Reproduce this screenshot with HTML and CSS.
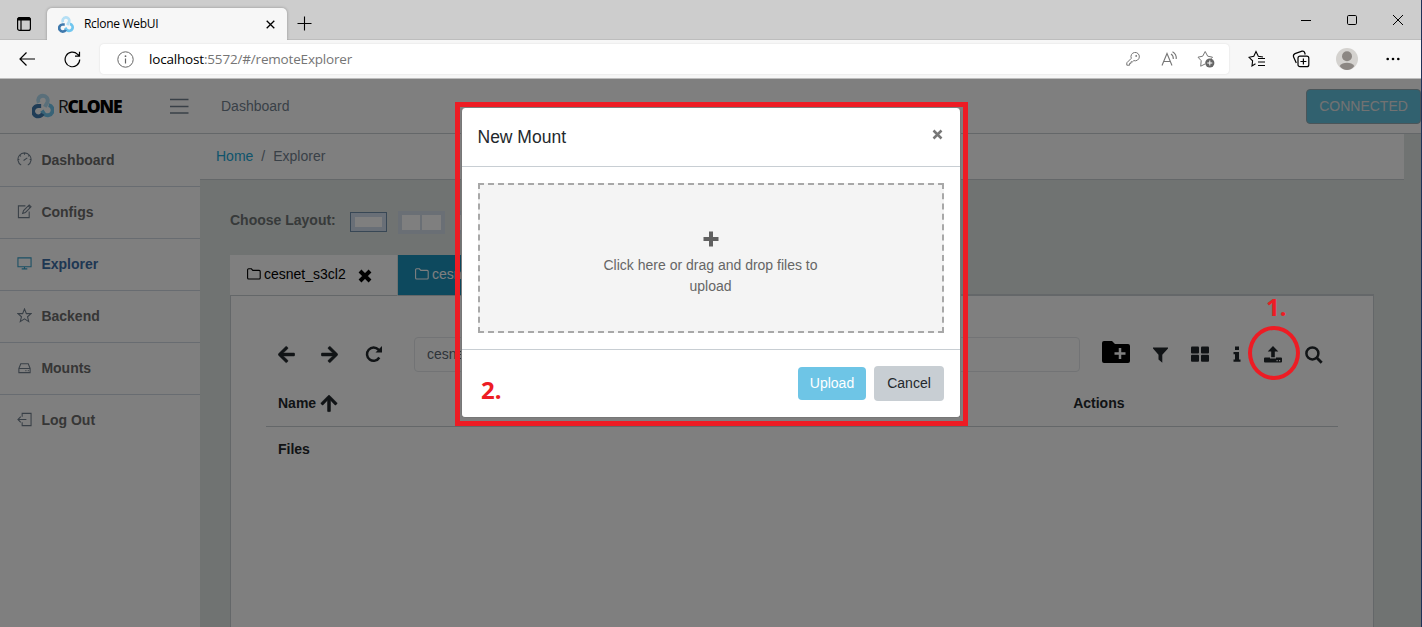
FILE: index.html
```html
<!DOCTYPE html>
<html lang="en">
<head>
<meta charset="utf-8">
<title>Rclone WebUI</title>
<link rel="stylesheet" href="styles.css">
</head>
<body>
<svg width="0" height="0" class="defs">
  <symbol id="rclone" viewBox="0 0 48 54">
    <g fill="none" stroke-width="8.500">
      <path class="c-light" d="M14.500 20A10.500 10.500 0 1 1 33.500 19L28 29"/>
      <path class="c-sky" d="M36.500 25A11.300 11.300 0 1 1 27 45L21.500 37"/>
      <path class="c-navy" d="M23.500 44A11.300 11.300 0 1 1 13 27H20"/>
    </g>
  </symbol>
  <symbol id="folder" viewBox="0 0 14 12">
    <path d="M.6 10V1.8Q.6.8 1.6.8H4.4L5.8 2.4H12.2Q13.2 2.4 13.2 3.4V10Q13.2 11 12.2 11H1.6Q.6 11 .6 10Z" fill="none" stroke="currentColor" stroke-width="1.1"/>
  </symbol>
  <symbol id="arrow" viewBox="0 0 448 512">
    <path fill="currentColor" stroke="currentColor" stroke-width="14" d="M257.5 445.1l-22.2 22.2c-9.4 9.4-24.6 9.4-33.9 0L7 273c-9.4-9.4-9.4-24.6 0-33.9L201.4 44.7c9.4-9.4 24.6-9.4 33.9 0l22.2 22.2c9.5 9.5 9.3 25-.4 34.3L136.6 216H424c13.3 0 24 10.7 24 24v32c0 13.3-10.7 24-24 24H136.6l120.5 114.8c9.8 9.3 10 24.8.4 34.3z"/>
  </symbol>
</svg>

<div class="window">
  <div class="titlebar">
    <svg class="tab-menu" width="16" height="16" viewBox="0 0 16 16"><rect x="1.6" y="1.6" width="12.8" height="12.8" rx="2" fill="none" stroke="#000" stroke-width="1.2"/><path d="M1.5 2.5Q2 1 3.500 1H12.500Q14 1 14.500 2.500V4.600H1.500Z"/><path d="M5 4V14.500" stroke="#000" stroke-width="1.200"/></svg>
    <div class="browser-tab">
      <svg class="favicon" width="16" height="17"><use href="#rclone"/></svg>
      <span>Rclone WebUI</span>
      <svg class="tab-close" width="9" height="9" viewBox="0 0 9 9"><path d="M.7.7L8.300 8.300M8.300.7L.7 8.300" stroke="#000" stroke-width="1.300"/></svg>
    </div>
    <svg class="new-tab" width="15" height="15" viewBox="0 0 15 15"><path d="M7.500.5V14.500M.5 7.500H14.500" stroke="#000" stroke-width="1.100"/></svg>
    <div class="win-buttons">
      <svg width="10" height="10" viewBox="0 0 10 10"><path d="M0 5.500H10" stroke="#000"/></svg>
      <svg width="10" height="10" viewBox="0 0 10 10"><rect x=".5" y=".5" width="9" height="9" rx="1.200" fill="none" stroke="#000"/></svg>
      <svg width="10" height="10" viewBox="0 0 10 10"><path d="M0 0L10 10M10 0L0 10" stroke="#000"/></svg>
    </div>
  </div>

  <div class="addressbar">
    <svg class="nav-back" width="17" height="14" viewBox="0 0 17 14"><path d="M7.500.5L1 7L7.500 13.500M1 7H16" fill="none" stroke="#000" stroke-width="1.200"/></svg>
    <svg class="nav-reload" width="17" height="17" viewBox="0 0 17 17"><path d="M15.700 8.500A7.300 7.300 0 1 1 13.600 3.300L15.500 5M15.500.8V5.200H11" fill="none" stroke="#000" stroke-width="1.200"/></svg>
    <div class="url-box">
      <svg width="17" height="17" viewBox="0 0 17 17"><circle cx="8.500" cy="8.500" r="7.700" fill="none" stroke="#666"/><path d="M8.500 7.500V12.500" stroke="#666" stroke-width="1.200"/><circle cx="8.500" cy="5.200" r=".9" fill="#666"/></svg>
      <span class="url"><b>localhost</b>:5572/#/remoteExplorer</span>
      <svg class="i-key" width="14" height="14" viewBox="0 0 14 14"><path d="M5.300 6.300A4.200 4.200 0 1 1 7.800 8.600L6.500 9.800H5V11.300H3.600V13.200H.8V10.800Z" fill="none" stroke="#767676"/><circle cx="10.200" cy="3.900" r=".9" fill="#767676"/></svg>
      <svg class="i-read" width="17" height="16" viewBox="0 0 17 16"><path d="M1 14.500L6 2.500L11 14.500M2.800 10.500H9.200M10 3Q12.500 4.500 12.300 8M11.500.7Q15.700 3 15.200 8" fill="none" stroke="#767676" stroke-width="1.100"/></svg>
      <svg class="i-fav" width="18" height="18" viewBox="0 0 18 18"><path d="M8 14L3.700 16.200L4.200 10.700L1 7.200L5.700 6.200L8.200 1.500L10.700 6.200L15.500 7.200L14 8.800" fill="none" stroke="#767676"/><circle cx="12.800" cy="13" r="4.600" fill="#666"/><path d="M12.800 10.500V15.500M10.300 13H15.300" stroke="#fff"/></svg>
    </div>
    <svg class="t-star" width="18" height="18" viewBox="0 0 18 18"><path d="M7.500 13.800L4 16L4.600 10.800L1 7.300L5.800 6.300L8 1.500L10.300 6.300L15 7M10 8.500H17M10 12H17M10 15.500H17" fill="none" stroke="#000" stroke-width="1.100"/></svg>
    <svg class="t-coll" width="18" height="18" viewBox="0 0 18 18"><rect x="6" y="6.200" width="10.800" height="10.500" rx="2" fill="none" stroke="#000" stroke-width="1.200"/><path d="M11.400 8.500V14.500M8.400 11.500H14.400M4.300 13L1.500 6.800Q1 4.500 3 3.600L10 1.200Q12.200.8 12.800 3L13.200 4.500" fill="none" stroke="#000" stroke-width="1.200"/></svg>
    <svg class="t-user" width="22" height="22" viewBox="0 0 22 22"><circle cx="11" cy="11" r="11" fill="#d4d2cf"/><circle cx="11" cy="8.300" r="5" fill="#8c8783"/><path d="M3.700 18Q6 14.800 11 14.800T18.300 18Q15.500 22 11 22T3.700 18Z" fill="#8c8783"/></svg>
    <svg class="t-more" width="14" height="4" viewBox="0 0 14 4"><g fill="#000"><circle cx="1.700" cy="2" r="1.300"/><circle cx="7" cy="2" r="1.300"/><circle cx="12.300" cy="2" r="1.300"/></g></svg>
  </div>

  <div class="page">
    <header class="app-header">
      <div class="brand"><svg width="22" height="26"><use href="#rclone"/></svg><span class="word">R<b>CLONE</b></span></div>
      <svg class="burger" width="19" height="16" viewBox="0 0 19 16"><path d="M0 1.500H18.500M0 8.500H18.500M0 15H18.500" stroke="#73818f" stroke-width="1.300"/></svg>
      <span class="header-link">Dashboard</span>
      <button class="connected">CONNECTED</button>
    </header>
    <div class="app-body">
      <nav class="sidebar">
        <a><svg viewBox="0 0 16 16"><path d="M4.500 14A7 7 0 1 1 11.500 14M7 9L11 6.300M8 1V3M3 3.500L4.200 4.700M1 8H2.500M13.500 8H15M13 3.500L12 4.600"/></svg>Dashboard</a>
        <a><svg viewBox="0 0 16 16"><path d="M9 2H1.500V14.500H13V8M6 10L7 7L13 1L15 3L9 9L6 10ZM12 2L14 4"/></svg>Configs</a>
        <a class="active"><svg viewBox="0 0 16 16"><path d="M1 2H15V11.500H1ZM8 11.500V13.500M5 13.700H11"/></svg>Explorer</a>
        <a><svg viewBox="0 0 16 16"><path d="M8 1L10 6H15L11.200 9.300L12.500 14.500L8 11.600L3.500 14.500L4.800 9.300L1 6H6Z"/></svg>Backend</a>
        <a><svg viewBox="0 0 16 16"><path d="M2 9L4 4H12L14 9V13.500H2ZM2 9H14M9 11.300H10M11.500 11.300H12.500"/></svg>Mounts</a>
        <a><svg viewBox="0 0 16 16"><path d="M5.500 5V1.500H15V14.500H5.500V11M10 8H1M4 5L1 8L4 11"/></svg>Log Out</a>
      </nav>
      <main>
        <div class="breadcrumb"><a>Home</a><i>/</i><span>Explorer</span></div>
        <div class="layout-row">
          <strong>Choose Layout:</strong>
          <span class="lay lay-one"><em></em></span>
          <span class="lay lay-two"><em></em><em></em></span>
          <span class="lay lay-two"><em></em><em></em></span>
        </div>
        <div class="tabs">
          <div class="tab"><svg width="14" height="12"><use href="#folder"/></svg>cesnet_s3cl2<svg class="x" width="14" height="14" viewBox="0 0 14 14"><path d="M2 2L12 12M12 2L2 12" stroke="#000" stroke-width="4"/></svg></div>
          <div class="tab blue"><svg width="14" height="12"><use href="#folder"/></svg>cesnet_s3cl2</div>
          <div class="tab-rest"></div>
        </div>
        <section class="card">
          <div class="tools">
            <svg width="17" height="19"><use href="#arrow"/></svg>
            <svg class="fwd" width="17" height="19"><use href="#arrow"/></svg>
            <svg class="redo" width="18" height="18" viewBox="0 0 18 18"><path d="M14.300 12.500A6.600 6.600 0 1 1 13.500 4.700L15 6" fill="none" stroke="currentColor" stroke-width="2.500"/><path d="M17 1V7.500H10.500Z" fill="currentColor"/></svg>
            <div class="path">cesnet_s3cl2:</div>
            <svg class="k-folder" width="28" height="23" viewBox="0 0 28 23"><path fill="#000" d="M0 2Q0 0 2 0H10L13 3H26Q28 3 28 5V20Q28 22 26 22H2Q0 22 0 20Z"/><path d="M18 7V18M12.500 12.500H23.500" stroke="#fff" stroke-width="2.500"/></svg>
            <svg class="k-filter" width="15" height="16" viewBox="0 0 15 16"><path fill="currentColor" d="M0 .5H15V1.500L9.300 7.800V15.700L5.500 12.500V7.800L0 1.500Z"/></svg>
            <svg class="k-grid" width="18" height="16" viewBox="0 0 18 16"><g fill="currentColor"><rect y=".5" width="8" height="7" rx="1"/><rect x="10" y=".5" width="8" height="7" rx="1"/><rect y="8.700" width="8" height="7" rx="1"/><rect x="10" y="8.700" width="8" height="7" rx="1"/></g></svg>
            <svg class="k-info" width="8" height="16" viewBox="0 0 8 16"><path fill="currentColor" d="M2 .5H6V4H2ZM.5 6H6V13.500H7.500V15.700H.5V13.500H2V8.200H.5Z"/></svg>
            <svg class="k-up" width="18" height="17" viewBox="0 0 18 17"><path fill="currentColor" d="M9 0L14.300 5.500H10.800V11.300H7.200V5.500H3.700ZM1 11.500H6V12.600H12V11.500H17Q18 11.500 18 12.500V15.600Q18 16.600 17 16.600H1Q0 16.600 0 15.600V12.500Q0 11.500 1 11.500Z"/><path d="M12.500 14.700H13.700M15 14.700H16.200" stroke="#fff" stroke-width="1.200"/></svg>
            <svg class="k-search" width="18" height="18" viewBox="0 0 18 18"><circle cx="7.400" cy="7.400" r="6" fill="none" stroke="currentColor" stroke-width="2.500"/><path d="M11.800 11.800L16.700 16.700" stroke="currentColor" stroke-width="2.800"/></svg>
          </div>
          <div class="thead"><span>Name</span><svg class="up" width="18" height="19"><use href="#arrow"/></svg><span class="actions">Actions</span></div>
          <div class="files">Files</div>
        </section>
      </main>
    </div>
    <div class="backdrop"></div>
  </div>

  <div class="frame">
    <div class="modal">
      <div class="modal-header"><h5>New Mount</h5><svg width="11" height="11" viewBox="0 0 11 11"><path d="M1.500 1.500L9.500 9.500M9.500 1.500L1.500 9.500" stroke="#777" stroke-width="2.500"/></svg></div>
      <div class="modal-body"><div class="dropzone"><svg width="16" height="16" viewBox="0 0 16 16"><path d="M8 .5V15.500M.5 8H15.500" stroke="#606060" stroke-width="4"/></svg><p>Click here or drag and drop files to<br>upload</p></div></div>
      <div class="modal-footer"><span class="note">2.</span><button class="upload">Upload</button><button class="cancel">Cancel</button></div>
    </div>
  </div>
  <span class="note one">1.</span>
  <div class="ring"></div>
</div>
</body>
</html>
```
FILE: styles.css
```css
* { box-sizing: border-box; }
body { margin: 0; font: 14px/21px "Liberation Sans", Arial, sans-serif; }
svg { display: block; flex: none; }
.defs { position: absolute; }
button { font: inherit; }
.c-light { stroke: #b4dff5; }
.c-sky { stroke: #70c6ef; }
.c-navy { stroke: #3f79ad; }

.window { position: relative; width: 1422px; height: 627px; overflow: hidden; border-right: 1px solid #1f3258; display: flex; flex-direction: column; }

.titlebar { height: 40px; flex: none; background: #cdcdcd; border-bottom: 1px solid #bdbdbd; display: flex; align-items: flex-start; padding-left: 16px; }
.tab-menu { margin: 16px 15px 0 0; }
.browser-tab { width: 240px; height: 32px; margin-top: 8px; background: #f7f7f7; border-radius: 5px 5px 0 0; box-shadow: 0 0 3px rgba(0,0,0,.3); clip-path: inset(-4px -4px 0 -4px); display: flex; align-items: center; padding: 0 12px 0 11px; font: 12px/16px "Open Sans", sans-serif; }
.favicon { margin-right: 10px; }
.browser-tab span { letter-spacing: -.3px; }
.tab-close { margin-left: auto; }
.new-tab { margin: 16px 0 0 10px; }
.win-buttons { display: flex; gap: 36px; margin: 15px 18px 0 auto; }

.addressbar { height: 39px; flex: none; background: #f7f7f7; border-bottom: 1px solid #bdbdbd; display: flex; align-items: center; padding-left: 19px; }
.nav-reload { margin-left: 28px; }
.url-box { width: 1129px; height: 30px; margin-left: 19px; background: #fff; border-radius: 4px; box-shadow: 0 0 2px rgba(0,0,0,.12); display: flex; align-items: center; padding: 0 14px 0 17px; }
.url { margin-left: 15px; font: 13.5px/20px "Open Sans", sans-serif; color: #757575; letter-spacing: -.18px; }
.url b { font-weight: 400; color: #000; }
.i-key { margin-left: auto; }
.i-read { margin-left: 21px; }
.i-fav { margin-left: 19px; }
.t-star { margin-left: 19px; }
.t-coll { margin-left: 26px; }
.t-user { margin-left: 26px; }
.t-more { margin-left: 28px; }

.page { position: relative; flex: 1; min-height: 0; display: flex; flex-direction: column; background: #e1e6e4; }
.backdrop { position: absolute; inset: 0; background: rgba(0,0,0,.5); }
.app-header { height: 55px; flex: none; background: #fff; border-bottom: 1px solid #c8ced3; display: flex; align-items: center; padding-left: 32px; }
.brand { display: flex; align-items: center; width: 138px; }
.word { font: 17.5px/20px "Open Sans", sans-serif; letter-spacing: -1.2px; color: #222; margin-left: 4px; }
.word b { font-weight: 800; color: #000; }
.burger { width: 19px; }
.header-link { margin-left: 32px; color: #73818f; }
.connected { width: 115px; height: 35px; margin-left: auto; background: #63c2de; border: 1px solid #94aab2; border-radius: 4px; color: #e5e5e5; padding: 0; }

.app-body { flex: 1; display: flex; min-height: 0; }
.sidebar { width: 200px; flex: none; background: #fff; }
.sidebar a { height: 52px; display: flex; align-items: center; gap: 9px; padding-left: 17.4px; font-weight: 700; color: #6c6c6c; border-bottom: 1px solid #d0d8e3; }
.sidebar a:first-child { height: 53px; }
.sidebar a:last-child { border-color: transparent; }
.sidebar svg { width: 15px; height: 15px; fill: none; stroke: #73818f; stroke-width: 1.15; margin-top: -2px; }
.sidebar .active { color: #3c6ea6; }
.sidebar .active svg { stroke: #35a0c9; }
main { flex: 1; min-width: 0; display: flex; flex-direction: column; }
.breadcrumb { width: 1204px; height: 46px; flex: none; background: #fff; border-bottom: 1px solid #c8ced3; display: flex; align-items: center; gap: 8px; padding-left: 16px; color: #73818f; }
.breadcrumb a { color: #20a8d8; }
.breadcrumb i { font-style: normal; }
.layout-row { height: 75px; flex: none; display: flex; align-items: center; padding: 6px 0 0 30px; color: #6e7474; }
.lay { display: flex; margin-top: 3px; }
.lay em { background: #fff; }
.lay-one { width: 37px; height: 20px; margin-left: 14px; border: 1px solid #708eab; background: #d2dfee; padding: 4px; }
.lay-one em { flex: 1; }
.lay-two { width: 47px; height: 23px; margin-left: 11px; padding: 4px; gap: 2px; background: #d5dfea; }
.lay-two em { flex: 1; }
.tabs { height: 41px; flex: none; display: flex; padding-left: 30px; width: 1174px; }
.tab { width: 167px; flex: none; background: #fff; border-bottom: 1px solid #c8ced3; display: flex; align-items: center; padding: 0 0 2px 17px; color: #000; }
.tab > svg:first-child { margin-right: 3px; }
.tab .x { margin: 3px 0 0 12px; }
.blue { width: 168px; margin-left: 1px; background: #1b92bc; color: #fff; }
.tab-rest { flex: 1; border-bottom: 2px solid #c8ced3; }
.card { width: 1144px; margin-left: 30px; flex: 1; background: #fff; border: solid #c8ced3; border-width: 0 1px; padding: 41px 35px 0; color: #23282c; }
.tools { height: 35px; display: flex; align-items: center; padding-left: 12px; }
.fwd { transform: scaleX(-1); margin-left: 26px; }
.redo { margin: -1px 0 0 27px; }
.path { width: 666px; height: 35px; margin-left: 31px; border: 1px solid #e4e7ea; border-radius: 4px; padding: 6px 12px; color: #5c6873; }
.k-folder { margin: -4px 0 0 22px; }
.k-filter { margin-left: 23px; }
.k-grid { margin: -2px 0 0 23px; }
.k-info { margin: -1px 0 0 24px; }
.k-up { margin: -1px 0 0 23px; }
.k-search { margin: 1px 0 0 23px; }
.thead { height: 55px; border-bottom: 1px solid #c8ced3; display: flex; align-items: center; padding: 8px 0 0 12px; font-weight: 700; }
.up { transform: rotate(90deg); margin-left: 4px; }
.actions { margin-left: 735px; }
.files { padding: 12px; font-weight: 700; }

.frame { position: absolute; left: 455px; top: 102px; width: 513px; height: 324px; border: 5px solid #ed1c24; padding: 1px 2px 3px 1px; }
.modal { width: 500px; height: 310px; background: #fff; border: 1px solid #777; border-top: 0; border-radius: 4px; display: flex; flex-direction: column; }
.modal-header { height: 59px; border-bottom: 1px solid #c8ced3; display: flex; justify-content: space-between; padding: 16px 17px 0 15.5px; }
.modal-header h5 { margin: 0; font-size: 17.5px; line-height: 26px; font-weight: 400; color: #23282c; }
.modal-header svg { margin-top: 5px; }
.modal-body { padding: 16px; height: 182px; }
.dropzone { height: 150px; border: 2px dashed #a8a8a8; background: #f4f4f4; display: flex; flex-direction: column; align-items: center; padding: 45.500px 1px 0 0; color: #666; }
.dropzone p { margin: 8.500px 0 0; text-align: center; }
.modal-footer { flex: 1; border-top: 1px solid #c8ced3; display: flex; align-items: center; gap: 8px; padding: 0 16px 0 19px; }
.note { font: 700 24px/28px "Noto Sans", sans-serif; color: #ed1c24; }
.modal-footer .note { margin: 13px auto 0 0; }
.upload, .cancel { border: 0; border-radius: 4px; padding: 0; }
.upload { width: 68px; height: 33px; background: #6ec5e6; color: #fff; }
.cancel { width: 70px; height: 35px; background: #c8ced3; color: #23282c; }
.one { position: absolute; left: 1266px; top: 293px; }
.ring { position: absolute; left: 1248px; top: 326px; width: 52px; height: 54px; border: 4px solid #ed1c24; border-radius: 50%; }
```
